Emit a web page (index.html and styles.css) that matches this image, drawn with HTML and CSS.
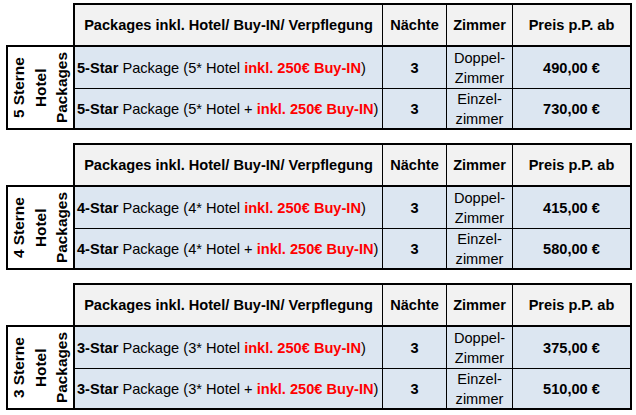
FILE: index.html
```html
<!DOCTYPE html>
<html lang="de">
<head>
<meta charset="utf-8">
<title>Packages</title>
<link rel="stylesheet" href="styles.css">
</head>
<body>
<div class="page">

  <section class="block">
    <div class="side">
      <div class="side-spacer"></div>
      <div class="side-label"><span class="rot">5 Sterne<br>Hotel<br>Packages</span></div>
    </div>
    <div class="table">
      <div class="cell head c1"><span>Packages inkl. Hotel/ Buy-IN/ Verpflegung</span></div>
      <div class="cell head c2"><span>Nächte</span></div>
      <div class="cell head c3"><span>Zimmer</span></div>
      <div class="cell head c4"><span>Preis p.P. ab</span></div>

      <div class="cell r1 c1 desc"><span><b>5-Star</b> Package (5* Hotel <b class="red">inkl. 250€ Buy-IN</b>)</span></div>
      <div class="cell r1 c2 bold"><span>3</span></div>
      <div class="cell r1 c3 room"><span>Doppel-<br>Zimmer</span></div>
      <div class="cell r1 c4 bold"><span>490,00 €</span></div>

      <div class="cell r2 c1 desc"><span><b>5-Star</b> Package (5* Hotel + <b class="red">inkl. 250€ Buy-IN</b>)</span></div>
      <div class="cell r2 c2 bold"><span>3</span></div>
      <div class="cell r2 c3 room"><span>Einzel-<br>zimmer</span></div>
      <div class="cell r2 c4 bold"><span>730,00 €</span></div>
    </div>
  </section>

  <section class="block">
    <div class="side">
      <div class="side-spacer"></div>
      <div class="side-label"><span class="rot">4 Sterne<br>Hotel<br>Packages</span></div>
    </div>
    <div class="table">
      <div class="cell head c1"><span>Packages inkl. Hotel/ Buy-IN/ Verpflegung</span></div>
      <div class="cell head c2"><span>Nächte</span></div>
      <div class="cell head c3"><span>Zimmer</span></div>
      <div class="cell head c4"><span>Preis p.P. ab</span></div>

      <div class="cell r1 c1 desc"><span><b>4-Star</b> Package (4* Hotel <b class="red">inkl. 250€ Buy-IN</b>)</span></div>
      <div class="cell r1 c2 bold"><span>3</span></div>
      <div class="cell r1 c3 room"><span>Doppel-<br>Zimmer</span></div>
      <div class="cell r1 c4 bold"><span>415,00 €</span></div>

      <div class="cell r2 c1 desc"><span><b>4-Star</b> Package (4* Hotel + <b class="red">inkl. 250€ Buy-IN</b>)</span></div>
      <div class="cell r2 c2 bold"><span>3</span></div>
      <div class="cell r2 c3 room"><span>Einzel-<br>zimmer</span></div>
      <div class="cell r2 c4 bold"><span>580,00 €</span></div>
    </div>
  </section>

  <section class="block">
    <div class="side">
      <div class="side-spacer"></div>
      <div class="side-label"><span class="rot">3 Sterne<br>Hotel<br>Packages</span></div>
    </div>
    <div class="table">
      <div class="cell head c1"><span>Packages inkl. Hotel/ Buy-IN/ Verpflegung</span></div>
      <div class="cell head c2"><span>Nächte</span></div>
      <div class="cell head c3"><span>Zimmer</span></div>
      <div class="cell head c4"><span>Preis p.P. ab</span></div>

      <div class="cell r1 c1 desc"><span><b>3-Star</b> Package (3* Hotel <b class="red">inkl. 250€ Buy-IN</b>)</span></div>
      <div class="cell r1 c2 bold"><span>3</span></div>
      <div class="cell r1 c3 room"><span>Doppel-<br>Zimmer</span></div>
      <div class="cell r1 c4 bold"><span>375,00 €</span></div>

      <div class="cell r2 c1 desc"><span><b>3-Star</b> Package (3* Hotel + <b class="red">inkl. 250€ Buy-IN</b>)</span></div>
      <div class="cell r2 c2 bold"><span>3</span></div>
      <div class="cell r2 c3 room"><span>Einzel-<br>zimmer</span></div>
      <div class="cell r2 c4 bold"><span>510,00 €</span></div>
    </div>
  </section>

</div>
</body>
</html>
```

FILE: styles.css
```css
* { box-sizing: border-box; }

html, body {
  margin: 0;
  padding: 0;
  background: #ffffff;
}

body {
  font-family: "Liberation Sans", Arial, sans-serif;
  font-size: 14.6px;
  color: #000;
}

.page {
  padding: 3px 0 0 6px;
  display: flex;
  flex-direction: column;
  gap: 13px;
}

.block {
  display: flex;
  height: 127px;
}

.side {
  width: 67px;
  display: flex;
  flex-direction: column;
}

.side-spacer {
  height: 42px;
}

.side-label {
  flex: 1;
  border-top: 2px solid #000;
  border-left: 2px solid #000;
  border-bottom: 2px solid #000;
  background: #fff;
  display: flex;
  align-items: center;
  justify-content: center;
  padding-right: 1px;
}

.rot {
  writing-mode: vertical-rl;
  transform: rotate(180deg);
  text-align: center;
  font-weight: bold;
  font-size: 15.4px;
  line-height: 21.5px;
  white-space: nowrap;
}

.table {
  width: 559px;
  border: 2px solid #000;
  display: grid;
  grid-template-columns: 308px 64px 66px 117px;
  grid-template-rows: 42px 42px 39px;
}

.cell {
  display: flex;
  align-items: center;
  justify-content: center;
  text-align: center;
  border-right: 1px solid #000;
  background: #dce6f1;
  white-space: nowrap;
  overflow: hidden;
}

.c4 { border-right: none; }

.head {
  background: #f2f2f2;
  font-weight: bold;
  border-bottom: 2px solid #000;
}

.r1 { border-bottom: 1px solid #000; }

.desc {
  justify-content: flex-start;
  padding-left: 2px;
}

.bold { font-weight: bold; }

.room {
  line-height: 20px;
  padding-top: 1px;
}

.red { color: #ff0000; }

b { font-weight: bold; }
```
